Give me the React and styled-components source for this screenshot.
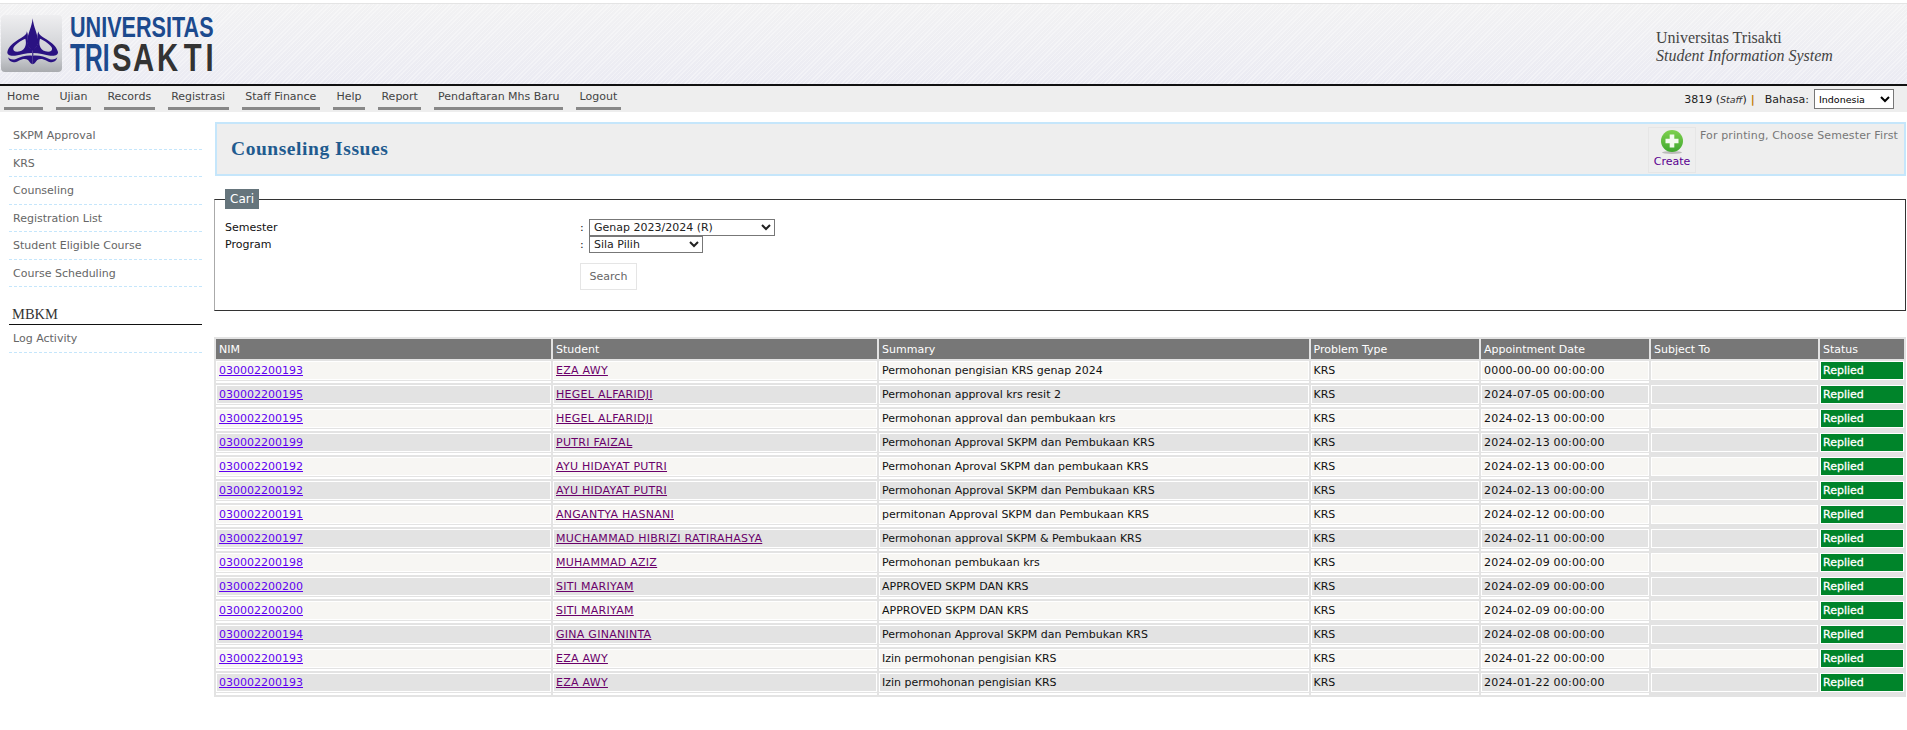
import React from 'react';
import styled, { createGlobalStyle } from 'styled-components';

const Global = createGlobalStyle`
  html, body { margin: 0; padding: 0; background: #fff; }
  body { font-family: "DejaVu Sans", Verdana, sans-serif; font-size: 11px; color: #111; }
`;

const Header = styled.header`
  height: 80px;
  margin-top: 3px;
  border-top: 1px solid #e4e4e4;
  border-bottom: 2px solid #111;
  display: flex;
  justify-content: space-between;
  background:
    repeating-linear-gradient(135deg, rgba(255,255,255,.35) 0 1px, rgba(255,255,255,0) 1px 3px),
    linear-gradient(180deg, #f2f2f3 0%, #ebebf3 100%);
`;
const LogoSvg = styled.svg`
  display: block;
  width: 220px;
  height: 80px;
`;
const Identity = styled.div`
  padding: 25px 75px 0 0;
  width: 176px;
  font-family: "Liberation Serif", serif;
  font-size: 16px;
  line-height: 18px;
  color: #444;
`;
const IdentityLine = styled.div`
  font-style: ${p => (p.$italic ? 'italic' : 'normal')};
  white-space: nowrap;
`;

const Nav = styled.nav`
  height: 26px;
  background: #eee;
  display: flex;
  justify-content: space-between;
  padding: 0 13px 0 3.5px;
`;
const NavList = styled.div`
  display: flex;
  gap: 13px;
  padding-top: 3px;
`;
const NavItem = styled.a`
  height: 18px;
  line-height: 16.5px;
  padding: 0 3.5px;
  color: #444;
  border-bottom: 3px solid #888;
`;
const UserBox = styled.div`
  display: flex;
  align-items: center;
  gap: 4px;
  color: #222;
`;
const Small = styled.i`
  font-size: 9.5px;
  color: #333;
`;
const Pipe = styled.span`
  color: #c07a00;
  font-weight: 700;
  margin: 0 6px 0 0;
`;
const LangSelect = styled.select`
  width: 80px;
  height: 20px;
  font: 9.5px "DejaVu Sans", sans-serif;
  border: 1px solid #777;
  background: #fff;
  margin-left: 1px;
`;

const Main = styled.div`
  display: flex;
  align-items: flex-start;
`;
const Sidebar = styled.aside`
  width: 193px;
  flex: none;
  padding: 10px 12px 0 9px;
`;
const SideItem = styled.a`
  display: block;
  box-sizing: border-box;
  height: 27.5px;
  line-height: 28px;
  padding-left: 4px;
  color: #666;
  border-bottom: 1px dashed #c5e6fb;
`;
const SideHeading = styled.h3`
  margin: 17px 0 0;
  height: 20px;
  padding-left: 3px;
  font: 400 14.5px/20px "Liberation Serif", serif;
  color: #333;
  border-bottom: 1px solid #111;
`;

const Content = styled.main`
  flex: 1;
  min-width: 0;
  padding: 10px 1px 0 0;
`;
const TitleBox = styled.div`
  box-sizing: border-box;
  height: 54px;
  margin-left: 1px;
  border: 2px solid #c5e6fb;
  background: #eee;
  display: flex;
  align-items: flex-start;
`;
const Title = styled.h1`
  flex: 1;
  margin: 0;
  padding-left: 14px;
  font: 700 19.5px/50px "Liberation Serif", serif;
  letter-spacing: .55px;
  color: #1f5b8f;
`;
const CreateButton = styled.a`
  box-sizing: border-box;
  width: 48px;
  height: 46px;
  margin-top: 3px;
  border: 1px solid #e6e6e6;
  display: flex;
  flex-direction: column;
  align-items: center;
  padding-top: 1px;
  color: #5a0090;
`;
const PrintNote = styled.div`
  width: 204px;
  padding: 5px 0 0 4px;
  color: #777;
  letter-spacing: .12px;
  white-space: nowrap;
`;

const SearchSet = styled.fieldset`
  margin: 13px 0 0;
  padding: 0 10px;
  height: 122px;
  box-sizing: border-box;
  border: 1px solid #333;
  border-left-color: #aaa;
  min-width: 0;
`;
const Legend = styled.legend`
  padding: 0 5px;
  height: 20px;
  line-height: 20px;
  font-size: 12px;
  color: #fff;
  background: #66757c;
`;
const FormRow = styled.div`
  display: grid;
  grid-template-columns: 355px 9px auto;
  justify-content: start;
  align-items: center;
  height: 17px;
  margin-top: ${p => p.$top || 0}px;
  color: #111;
`;
const FormSelect = styled.select`
  width: ${p => p.$w}px;
  height: 17px;
  padding: 0;
  font: 11px "DejaVu Sans", sans-serif;
  border: 1px solid #777;
  background: #fff;
  color: #222;
`;
const SearchButton = styled.button`
  display: block;
  box-sizing: border-box;
  margin: 10px 0 0 355px;
  width: 57px;
  height: 27px;
  background: #fff;
  border: 1px solid #e5e5e5;
  font: 11px "DejaVu Sans", sans-serif;
  color: #666;
`;

const Table = styled.table`
  width: 100%;
  margin-top: 26px;
  table-layout: fixed;
  border-collapse: separate;
  border-spacing: 2px;
  background: #e3e3e3;
`;
const Th = styled.th`
  height: 20px;
  padding: 0 0 0 3px;
  background: #777;
  color: #fff;
  text-align: left;
  font-weight: 400;
  font-size: 11px;
  white-space: nowrap;
`;
const Td = styled.td`
  height: 22px;
  padding: 0;
  vertical-align: top;
  box-sizing: border-box;
  border-bottom: 2px solid ${p => (p.$plain ? 'transparent' : '#fff')};
`;
const CellBox = styled.div`
  box-sizing: border-box;
  height: 19px;
  line-height: 17px;
  padding-left: 2px;
  border: 1px solid #fff;
  background: ${p => (p.$odd ? '#e3e3e3' : '#f7f6f3')};
  color: #111;
  white-space: nowrap;
  overflow: hidden;
  letter-spacing: ${p => p.$track || 0}px;
`;
const StatusBox = styled(CellBox)`
  background: #00842a;
  color: #fff;
  -webkit-text-stroke: .3px #fff;
`;
const NimLink = styled.a`
  color: #5f00f0;
  text-decoration: underline;
`;
const StudentLink = styled.a`
  color: #6a006a;
  letter-spacing: .27px;
  text-decoration: underline;
`;

const rows = [
  ['030002200193', 'EZA AWY', 'Permohonan pengisian KRS genap 2024', '0000-00-00 00:00:00'],
  ['030002200195', 'HEGEL ALFARIDJI', 'Permohonan approval krs resit 2', '2024-07-05 00:00:00'],
  ['030002200195', 'HEGEL ALFARIDJI', 'Permohonan approval dan pembukaan krs', '2024-02-13 00:00:00'],
  ['030002200199', 'PUTRI FAIZAL', 'Permohonan Approval SKPM dan Pembukaan KRS', '2024-02-13 00:00:00'],
  ['030002200192', 'AYU HIDAYAT PUTRI', 'Permohonan Aproval SKPM dan pembukaan KRS', '2024-02-13 00:00:00'],
  ['030002200192', 'AYU HIDAYAT PUTRI', 'Permohonan Approval SKPM dan Pembukaan KRS', '2024-02-13 00:00:00'],
  ['030002200191', 'ANGANTYA HASNANI', 'permitonan Approval SKPM dan Pembukaan KRS', '2024-02-12 00:00:00'],
  ['030002200197', 'MUCHAMMAD HIBRIZI RATIRAHASYA', 'Permohonan approval SKPM & Pembukaan KRS', '2024-02-11 00:00:00'],
  ['030002200198', 'MUHAMMAD AZIZ', 'Permohonan pembukaan krs', '2024-02-09 00:00:00'],
  ['030002200200', 'SITI MARIYAM', 'APPROVED SKPM DAN KRS', '2024-02-09 00:00:00'],
  ['030002200200', 'SITI MARIYAM', 'APPROVED SKPM DAN KRS', '2024-02-09 00:00:00'],
  ['030002200194', 'GINA GINANINTA', 'Permohonan Approval SKPM dan Pembukan KRS', '2024-02-08 00:00:00'],
  ['030002200193', 'EZA AWY', 'Izin permohonan pengisian KRS', '2024-01-22 00:00:00'],
  ['030002200193', 'EZA AWY', 'Izin permohonan pengisian KRS', '2024-01-22 00:00:00'],
];

const navItems = ['Home', 'Ujian', 'Records', 'Registrasi', 'Staff Finance', 'Help', 'Report', 'Pendaftaran Mhs Baru', 'Logout'];
const sideItems = ['SKPM Approval', 'KRS', 'Counseling', 'Registration List', 'Student Eligible Course', 'Course Scheduling'];
const columns = [
  ['NIM', 335], ['Student', 324], ['Summary', 429.5], ['Problem Type', 168.5],
  ['Appointment Date', 168], ['Subject To', 167], ['Status', 84],
];

const wingPath = 'M80 64C84 82 30 92 22 126C21 134 30 139 45 137C60 135 80 129 96 129L96 137C80 135 60 141 48 147C36 151 27 146 24 142C28 158 42 160 56 152C68 146 78 146 84 150C88 154 90 160 98 163L98 118C90 116 84 108 82 96C83 84 86 74 80 64ZM76 86C80 100 78 118 60 124C46 127 38 123 40 114C46 102 62 92 76 86Z';

const Logo = () => (
  <LogoSvg viewBox="0 0 220 80" aria-label="Universitas Trisakti">
    <defs>
      <linearGradient id="tile" x1="0" y1="0" x2="0" y2="1">
        <stop offset="0" stopColor="#eeeef0" />
        <stop offset=".75" stopColor="#c9cbcf" />
        <stop offset="1" stopColor="#a9abaf" />
      </linearGradient>
    </defs>
    <rect x="1" y="11" width="61" height="57" rx="4" fill="url(#tile)" />
    <g transform="translate(0 6) scale(.3333)" fill="#2a1282">
      <path d="M98 25C100 50 113 72 115 94C115 108 104 118 98 122C92 118 81 108 81 94C83 72 96 50 98 25Z" />
      <path fillRule="evenodd" d={wingPath} />
      <path fillRule="evenodd" d={wingPath} transform="translate(196 0) scale(-1 1)" />
    </g>
    <g fontFamily="Liberation Sans, sans-serif" fontWeight="700">
      <text transform="translate(70 33) scale(.72 1)" fontSize="30" fill="#1c4a8e">UNIVERSITAS</text>
      <text transform="translate(70 67) scale(.63 1)" fontSize="39" fill="#1c4a8e">TRI</text>
      <text transform="translate(0 67) scale(.75 1)" fontSize="39" fill="#333" x="149.3 177.3 209.3 245 274">SAKTI</text>
    </g>
  </LogoSvg>
);

const PlusIcon = () => (
  <svg width="26" height="26" viewBox="0 0 26 26" aria-hidden="true">
    <defs>
      <linearGradient id="plus" x1="0" y1="0" x2="0" y2="1">
        <stop offset="0" stopColor="#7fd14f" />
        <stop offset="1" stopColor="#3fa82e" />
      </linearGradient>
    </defs>
    <ellipse cx="13" cy="23.5" rx="10" ry="1.5" fill="#bbb" />
    <circle cx="13" cy="12" r="11" fill="url(#plus)" />
    <path d="M10.7 5.5h4.6v4.2h4.2v4.6h-4.2v4.2h-4.6v-4.2H6.5V9.7h4.2Z" fill="#f4fbef" />
  </svg>
);

export default function App() {
  return (
    <>
      <Global />
      <Header>
        <Logo />
        <Identity>
          <IdentityLine>Universitas Trisakti</IdentityLine>
          <IdentityLine $italic>Student Information System</IdentityLine>
        </Identity>
      </Header>
      <Nav>
        <NavList>
          {navItems.map(n => <NavItem key={n}>{n}</NavItem>)}
        </NavList>
        <UserBox>
          <span>3819 (<Small>Staff</Small>)</span>
          <Pipe>|</Pipe>
          <span>Bahasa:</span>
          <LangSelect defaultValue="Indonesia"><option>Indonesia</option></LangSelect>
        </UserBox>
      </Nav>
      <Main>
        <Sidebar>
          {sideItems.map(s => <SideItem key={s}>{s}</SideItem>)}
          <SideHeading>MBKM</SideHeading>
          <SideItem>Log Activity</SideItem>
        </Sidebar>
        <Content>
          <TitleBox>
            <Title>Counseling Issues</Title>
            <CreateButton><PlusIcon /><span>Create</span></CreateButton>
            <PrintNote>For printing, Choose Semester First</PrintNote>
          </TitleBox>
          <SearchSet>
            <Legend>Cari</Legend>
            <FormRow $top={10}>
              <span>Semester</span><span>:</span>
              <FormSelect $w={186} defaultValue="a"><option value="a">Genap 2023/2024 (R)</option></FormSelect>
            </FormRow>
            <FormRow>
              <span>Program</span><span>:</span>
              <FormSelect $w={114} defaultValue="a"><option value="a">Sila Pilih</option></FormSelect>
            </FormRow>
            <SearchButton type="button">Search</SearchButton>
          </SearchSet>
          <Table>
            <colgroup>
              {columns.map(([n, w]) => <col key={n} width={w} />)}
            </colgroup>
            <thead>
              <tr>{columns.map(([n]) => <Th key={n}>{n}</Th>)}</tr>
            </thead>
            <tbody>
              {rows.map((r, i) => {
                const odd = i % 2 === 1;
                return (
                  <tr key={i}>
                    <Td><CellBox $odd={odd}><NimLink>{r[0]}</NimLink></CellBox></Td>
                    <Td><CellBox $odd={odd}><StudentLink>{r[1]}</StudentLink></CellBox></Td>
                    <Td><CellBox $odd={odd}>{r[2]}</CellBox></Td>
                    <Td><CellBox $odd={odd}>KRS</CellBox></Td>
                    <Td><CellBox $odd={odd} $track={0.2}>{r[3]}</CellBox></Td>
                    <Td $plain><CellBox $odd={odd} /></Td>
                    <Td $plain><StatusBox>Replied</StatusBox></Td>
                  </tr>
                );
              })}
            </tbody>
          </Table>
        </Content>
      </Main>
    </>
  );
}
